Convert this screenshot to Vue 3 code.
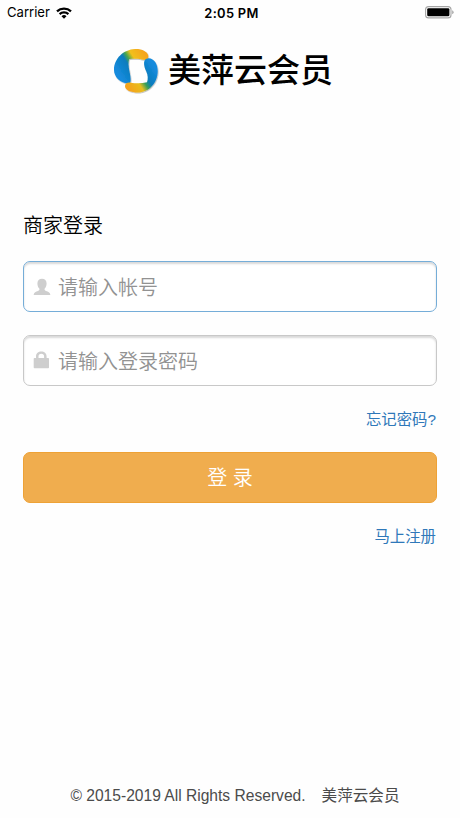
<script setup>
import { ref } from 'vue'

const account = ref('')
const password = ref('')
</script>

<template>
  <div class="screen">
    <div class="status">
      <div class="carrier">
        <span>Carrier</span>
        <svg class="wifi" viewBox="0 0 16 12" width="16" height="12">
          <g fill="none" stroke="#000" stroke-width="2.3">
            <path d="M1 4.4a10.2 10.2 0 0 1 14 0" />
            <path d="M3.6 7.2a6.400 6.400 0 0 1 8.800 0" />
          </g>
          <path d="M8 11.700 5.500 9.300a3.600 3.600 0 0 1 5 0z" />
        </svg>
      </div>
      <span class="time">2:05 PM</span>
      <svg class="battery" viewBox="0 0 29 13" width="29" height="13">
        <rect x=".6" y=".6" width="25.400" height="11.300" rx="3" fill="#fff" stroke="#a5a5a5" stroke-width="1.100" />
        <rect x="2.200" y="2.200" width="22.200" height="8.100" rx="1.400" />
        <path d="M27.200 4.300q1.400.6 1.400 2t-1.400 2z" fill="#a5a5a5" />
      </svg>
    </div>

    <header class="brand">
      <svg class="logo" viewBox="0 0 48 48" width="48" height="48">
        <defs>
          <linearGradient id="topArc" gradientUnits="userSpaceOnUse" x1="5" y1="26" x2="33" y2="8">
            <stop offset="0" stop-color="#168bdd" />
            <stop offset=".4" stop-color="#087cbd" />
            <stop offset=".52" stop-color="#4ba74a" />
            <stop offset=".66" stop-color="#f1c01c" />
            <stop offset="1" stop-color="#f6a51b" />
          </linearGradient>
          <linearGradient id="bottomArc" gradientUnits="userSpaceOnUse" x1="43" y1="22" x2="15" y2="40">
            <stop offset="0" stop-color="#168bdd" />
            <stop offset=".36" stop-color="#087cbd" />
            <stop offset=".5" stop-color="#399f57" />
            <stop offset=".66" stop-color="#e9bd1e" />
            <stop offset="1" stop-color="#f5a21b" />
          </linearGradient>
          <filter id="logoShadow" x="-10%" y="-10%" width="125%" height="125%">
            <feDropShadow dx=".6" dy=".8" stdDeviation=".7" flood-opacity=".3" />
          </filter>
        </defs>
        <g filter="url(#logoShadow)">
          <path fill="url(#topArc)" d="M17 37.500C8 37.500 2 30.500 2 24 2 12.500 11.500 3.500 23 3 30 2.800 35.800 5.500 36.300 10 36.500 13 34.600 14.300 31.500 13.800 27.500 12.700 23.500 12.200 17.200 13.100 16.200 16 16.300 20 17.400 25 18.800 31.500 19.500 37.300 17 37.500Z" />
          <path fill="url(#bottomArc)" d="M36.500 12.200C42.500 12.500 45.700 18.500 45.700 25 45.700 37.200 36.600 46.500 26 46.500 18.800 46.500 13.500 44.300 13 40.500 12.800 37.300 15.500 36.200 19 36.700 24 37.600 30 37.500 35 36.300 36.300 33 36 29 34.300 25.500 31.500 19.500 30.500 12.500 36.500 12.200Z" />
        </g>
      </svg>
      <h1>美萍云会员</h1>
    </header>

    <main>
      <h2>商家登录</h2>
      <label class="field active">
        <svg viewBox="0 0 18 18" width="18" height="18">
          <path d="M9 .7c2.900 0 4.600 1.900 4.600 4.700 0 2.300-.9 4-1.900 5.200-.5 1.300.1 2 1.300 2.500 2.100.8 4 1.200 4.400 3.900H.6c.4-2.700 2.300-3.100 4.400-3.900 1.200-.5 1.800-1.200 1.300-2.500-1-1.200-1.900-2.900-1.900-5.200C4.400 2.600 6.100.7 9 .7z" />
        </svg>
        <input v-model="account" type="text" placeholder="请输入帐号">
      </label>
      <label class="field">
        <svg class="lock" viewBox="0 0 18 18" width="18" height="18">
          <path fill-rule="evenodd" d="M3 7V5.500C3 2.300 5.300.6 8.300.6s5.300 1.700 5.300 4.900V7h1.600q.8 0 .8.800v8.600q0 .8-.8.800H1.500q-.8 0-.8-.8V7.800q0-.8.8-.8zm2.500 0h5.600V5.500c0-1.800-1-2.700-2.800-2.700s-2.800.9-2.800 2.700z" />
        </svg>
        <input v-model="password" type="password" placeholder="请输入登录密码">
      </label>
      <a class="link">忘记密码?</a>
      <button type="button">登 录</button>
      <a class="link">马上注册</a>
    </main>

    <footer><span>© 2015-2019 All Rights Reserved.</span><span>美萍云会员</span></footer>
  </div>
</template>

<style>
body {
  background: #fff;
}
</style>

<style scoped>
.screen {
  box-sizing: border-box;
  display: flex;
  flex-direction: column;
  height: 818px;
  background: #fefefe;
  color: #000;
  font-family: "Liberation Sans", "Noto Sans CJK SC", sans-serif;
}
.status {
  display: grid;
  grid-template-columns: 1fr auto 1fr;
  align-items: center;
  height: 24px;
  padding: 0 6px 0 7px;
  font: 13.1px/24px Inter, sans-serif;
}
.carrier {
  display: flex;
  align-items: center;
  gap: 6px;
}
.carrier span {
  padding-bottom: 2px;
}
.time {
  padding: 0 0 0 2px;
  font-weight: 600;
  font-size: 12.9px;
  line-height: 25px;
  letter-spacing: .3px;
}
.battery {
  justify-self: end;
  margin-bottom: 2px;
}
.brand {
  display: flex;
  align-items: center;
  justify-content: center;
  gap: 8px;
  height: 48px;
  margin-top: 22px;
  padding-right: 15px;
}
h1 {
  margin: 0;
  padding: 2px 0 0;
  font-size: 33px;
  line-height: 44px;
  font-weight: 500;
}
main {
  display: flex;
  flex-direction: column;
  padding: 119px 23px 0;
}
h2 {
  margin: 0 0 21px;
  font-size: 20px;
  line-height: 27px;
  font-weight: 350;
}
.field {
  box-sizing: border-box;
  display: flex;
  align-items: center;
  gap: 7px;
  height: 51px;
  padding: 0 10px 0 9px;
  border: 1px solid #c8c8c8;
  border-radius: 7px;
  background: #fff;
  box-shadow: inset 0 2px 2px rgba(0, 0, 0, .15);
}
.field.active {
  margin-bottom: 23px;
  border-color: #75add8;
}
.field svg {
  flex: none;
  fill: #cecece;
}
.field .lock {
  margin-bottom: 2px;
}
input {
  flex: 1;
  min-width: 0;
  height: 30px;
  padding: 0;
  border: 0;
  outline: 0;
  background: transparent;
  font: 350 20px/30px "Noto Sans CJK SC", sans-serif;
}
input::placeholder {
  color: #929292;
  opacity: 1;
}
.link {
  align-self: flex-end;
  margin: 22px 1px 0 0;
  color: #2f78b9;
  font-size: 15.4px;
  line-height: 24px;
}
button {
  height: 51px;
  margin-top: 20px;
  padding: 2px 0 0;
  border: 1px solid #eea236;
  border-radius: 7px;
  background: #f0ad4e;
  color: #fff;
  font: 350 20px/47px "Liberation Sans", "Noto Sans CJK SC", sans-serif;
}
footer {
  display: flex;
  justify-content: center;
  gap: 16px;
  margin-top: auto;
  padding: 0 0 10px 10px;
  color: #4b4b4b;
  font-size: 15.6px;
  line-height: 24px;
}
</style>
